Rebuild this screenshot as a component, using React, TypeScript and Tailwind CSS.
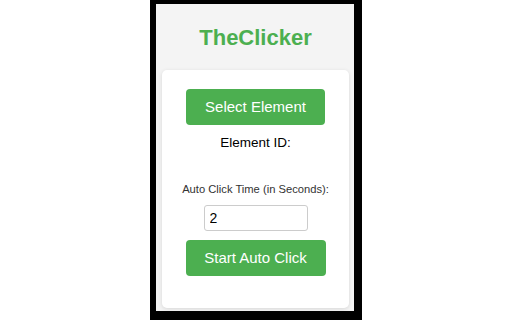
export default function App() {
    return (
        <div
            className="w-[512px] h-[320px] bg-white flex justify-center"
            style={{ fontFamily: '"Liberation Sans", Arial, sans-serif' }}
        >
            <div className="w-[212px] h-[320px] bg-black pt-[4px] pl-[6px] pr-[8px] pb-[9px]">
                <div className="h-full bg-[#f4f4f4] flex flex-col pt-[23px] pl-[6px] pr-[5px]">
                    <h1 className="text-center text-[22px] leading-[22px] font-bold text-[#4caf50] mb-[21px]">
                        TheClicker
                    </h1>
                    <div className="bg-white rounded-[5px] shadow-[0_1px_4px_rgba(0,0,0,0.12)] flex flex-col items-center pt-[19px] pb-[32px]">
                        <button className="w-[139px] h-[36px] bg-[#4caf50] text-white text-[15px] rounded-[4px]">
                            Select Element
                        </button>
                        <p className="mt-[10px] text-[13.5px] leading-[16px] text-black">Element ID:</p>
                        <p className="mt-[31px] text-[11.2px] leading-[14px] text-[#333]">
                            Auto Click Time (in Seconds):
                        </p>
                        <input
                            type="number"
                            defaultValue={2}
                            className="mt-[9px] w-[104px] h-[26px] border border-[#ccc] rounded-[3px] pl-[5px] text-[14px] text-black outline-none"
                        />
                        <button className="mt-[9px] w-[140px] h-[36px] bg-[#4caf50] text-white text-[15px] rounded-[4px]">
                            Start Auto Click
                        </button>
                    </div>
                </div>
            </div>
        </div>
    );
}
